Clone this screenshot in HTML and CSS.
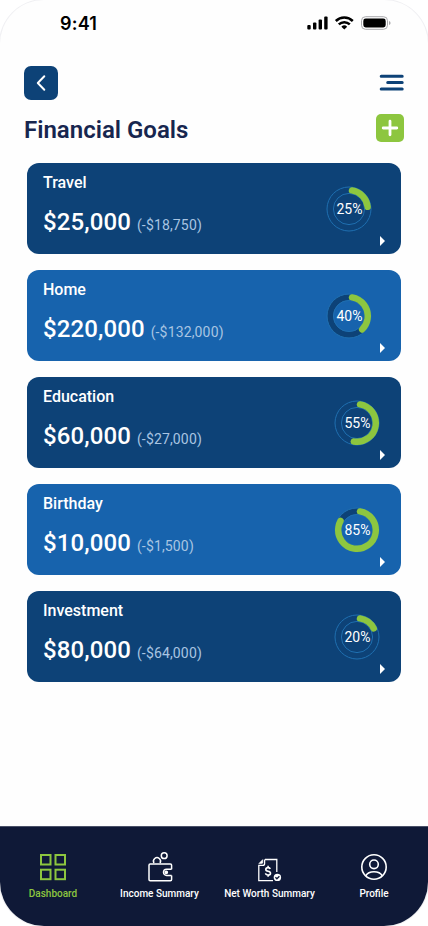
FILE: index.html
```html
<!DOCTYPE html>
<html lang="en">
<head>
    <meta charset="UTF-8">
    <meta name="viewport" content="width=device-width, initial-scale=1.0">
    <title>Financial Goals</title>
    <link rel="stylesheet" href="styles.css">
</head>
<body>
    <div class="screen">
        <div class="status-bar">
            <span class="time">9:41</span>
            <svg width="84" height="16" viewBox="0 0 84 16">
                <rect x="0.3" y="10" width="3.4" height="4.5" rx="1"/>
                <rect x="6" y="7.4" width="3.4" height="7.1" rx="1"/>
                <rect x="11.6" y="4.4" width="3.4" height="10.1" rx="1"/>
                <rect x="17.2" y="1.6" width="3.4" height="12.9" rx="1"/>
                <g fill="none" stroke="#000" stroke-width="2.5">
                    <path d="M28.8 6 A12.2 12.2 0 0 1 45.8 6"/>
                    <path d="M31.8 9.4 A8 8 0 0 1 42.8 9.4"/>
                </g>
                <path d="M37.3 14.5 L34.4 11.7 A4.2 4.2 0 0 1 40.2 11.7 Z"/>
                <rect x="54.5" y="1.7" width="26" height="12.6" rx="4" fill="none" stroke="#a9a9ad"/>
                <rect x="56.3" y="3.5" width="22.4" height="9" rx="2.4"/>
                <path d="M82 5.9 q1.6 0.6 1.6 2.1 t-1.6 2.1 z" fill="#a9a9ad"/>
            </svg>
        </div>

        <div class="top-bar">
            <button class="back-btn">
                <svg width="34" height="34" viewBox="0 0 34 34"><path d="M20.3 10.3 L13.8 17 L20.3 23.7"/></svg>
            </button>
            <svg class="menu-icon" width="26" height="18" viewBox="0 0 26 18">
                <path d="M2.2 2.2 H23.2 M8.7 8.6 H23.2 M2.2 15.1 H23.2"/>
            </svg>
        </div>

        <div class="title-row">
            <h1>Financial Goals</h1>
            <button class="add-btn">
                <svg width="28" height="28" viewBox="0 0 28 28"><path d="M14 7.2 V20.8 M7.2 14 H20.8"/></svg>
            </button>
        </div>

        <div class="goals">
            <div class="goal">
                <h2>Travel</h2>
                <p><span class="amount">$25,000</span><span class="left">(-$18,750)</span></p>
                <div class="ring">
                    <svg width="46" height="46" viewBox="-23 -23 46 46">
                        <circle class="track" r="18.8"/>
                        <circle class="edge" r="22"/>
                        <circle class="edge" r="15.6"/>
                        <circle class="bar" r="18.8" pathLength="360" stroke-dasharray="74 360" transform="rotate(-81)"/>
                    </svg>
                    <span>25%</span>
                </div>
                <i class="arrow"></i>
            </div>
            <div class="goal light">
                <h2>Home</h2>
                <p><span class="amount">$220,000</span><span class="left">(-$132,000)</span></p>
                <div class="ring">
                    <svg width="46" height="46" viewBox="-23 -23 46 46">
                        <circle class="track" r="18.8"/>
                        <circle class="edge" r="22"/>
                        <circle class="edge" r="15.6"/>
                        <circle class="bar" r="18.8" pathLength="360" stroke-dasharray="127 360" transform="rotate(-81)"/>
                    </svg>
                    <span>40%</span>
                </div>
                <i class="arrow"></i>
            </div>
            <div class="goal shift">
                <h2>Education</h2>
                <p><span class="amount">$60,000</span><span class="left">(-$27,000)</span></p>
                <div class="ring">
                    <svg width="46" height="46" viewBox="-23 -23 46 46">
                        <circle class="track" r="18.8"/>
                        <circle class="edge" r="22"/>
                        <circle class="edge" r="15.6"/>
                        <circle class="bar" r="18.8" pathLength="360" stroke-dasharray="181 360" transform="rotate(-81)"/>
                    </svg>
                    <span>55%</span>
                </div>
                <i class="arrow"></i>
            </div>
            <div class="goal light shift">
                <h2>Birthday</h2>
                <p><span class="amount">$10,000</span><span class="left">(-$1,500)</span></p>
                <div class="ring">
                    <svg width="46" height="46" viewBox="-23 -23 46 46">
                        <circle class="track" r="18.8"/>
                        <circle class="edge" r="22"/>
                        <circle class="edge" r="15.6"/>
                        <circle class="bar" r="18.8" pathLength="360" stroke-dasharray="290 360" transform="rotate(-81)"/>
                    </svg>
                    <span>85%</span>
                </div>
                <i class="arrow"></i>
            </div>
            <div class="goal shift">
                <h2>Investment</h2>
                <p><span class="amount">$80,000</span><span class="left">(-$64,000)</span></p>
                <div class="ring">
                    <svg width="46" height="46" viewBox="-23 -23 46 46">
                        <circle class="track" r="18.8"/>
                        <circle class="edge" r="22"/>
                        <circle class="edge" r="15.6"/>
                        <circle class="bar" r="18.8" pathLength="360" stroke-dasharray="54 360" transform="rotate(-81)"/>
                    </svg>
                    <span>20%</span>
                </div>
                <i class="arrow"></i>
            </div>
        </div>

        <nav class="tab-bar">
            <a class="active">
                <svg width="28" height="32" viewBox="0 0 28 32" stroke-width="2">
                    <rect x="2" y="4" width="9.5" height="9.5"/>
                    <rect x="16.5" y="4" width="9.5" height="9.5"/>
                    <rect x="2" y="18.7" width="9.5" height="9.5"/>
                    <rect x="16.5" y="18.7" width="9.5" height="9.5"/>
                </svg>
                Dashboard
            </a>
            <a>
                <svg width="28" height="32" viewBox="0 0 28 32" stroke-width="1.5">
                    <circle cx="18.2" cy="4.7" r="2.9"/>
                    <path d="M8 12 A3.5 3.5 0 1 1 14 12"/>
                    <path d="M25.6 18.2 V14.2 Q25.6 13 24.4 13 H4.2 Q3 13 3 14.2 V28.6 Q3 29.8 4.2 29.8 H24.4 Q25.6 29.8 25.6 28.6 V24.4"/>
                    <path d="M25.6 18.2 H20.6 A3.1 3.1 0 0 0 20.6 24.4 H25.6"/>
                    <circle cx="20.3" cy="21.3" r="1.1" fill="#fff"/>
                </svg>
                Income Summary
            </a>
            <a>
                <svg width="28" height="32" viewBox="0 0 28 32" stroke-width="1.3">
                    <path d="M9 8.5 H20.8 V21 M17 29.6 H2.8 V14.4 H6.6 Q8.6 14.4 8.6 12.4 V8.5"/>
                    <path d="M2.8 12.6 L6.8 8.6 V11.2 Q6.8 12.6 5.4 12.6 Z" fill="#fff" stroke-width="0.6"/>
                    <path stroke-width="1.6" d="M14.2 18 Q13.9 16.6 12.1 16.6 Q9.8 16.6 9.8 18.4 Q9.8 19.8 12.1 20.2 Q14.5 20.6 14.5 22.2 Q14.5 24 12.1 24 Q9.7 24 9.6 22.3 M12.1 14.8 V16.6 M12.1 24 V25.8"/>
                    <circle cx="21.4" cy="26.4" r="3.7" fill="#fff" stroke="none"/>
                    <path d="M19.4 26.3 L20.9 27.8 L23.4 25.2" stroke="#0f1937"/>
                </svg>
                Net Worth Summary
            </a>
            <a>
                <svg width="28" height="32" viewBox="0 0 28 32" stroke-width="1.6">
                    <circle cx="14" cy="16" r="12.2"/>
                    <circle cx="14" cy="13.3" r="4.3"/>
                    <path d="M5.8 24.8 Q8 20.8 14 20.8 T22.2 24.8"/>
                </svg>
                Profile
            </a>
        </nav>
    </div>
</body>
</html>
```

FILE: styles.css
```css
* {
    box-sizing: border-box;
}
body {
    margin: 0;
    background-color: #fff;
    font-family: Roboto, Arial, sans-serif;
}
.screen {
    display: flex;
    flex-direction: column;
    height: 926px;
    background: #fefefe;
    border-radius: 44px;
    box-shadow: 0 0 0 1px #f0f0f3;
    overflow: hidden;
}
.status-bar {
    display: flex;
    justify-content: space-between;
    align-items: center;
    height: 46px;
    padding: 0 37px 0 60px;
}
.time {
    padding-top: 2px;
    font-family: Inter, sans-serif;
    font-size: 18px;
    font-weight: 600;
    line-height: 20px;
    letter-spacing: 0.2px;
}
button {
    display: block;
    padding: 0;
    border: none;
}
button svg {
    display: block;
    fill: none;
    stroke: #fff;
    stroke-linecap: round;
    stroke-linejoin: round;
}
.top-bar {
    display: flex;
    justify-content: space-between;
    align-items: center;
    height: 34px;
    margin-top: 20px;
    padding: 0 23px 0 24px;
}
.back-btn {
    border-radius: 7px;
    background-color: #0d4277;
    stroke-width: 2;
}
.menu-icon {
    fill: none;
    stroke: #0d4277;
    stroke-width: 3;
    stroke-linecap: round;
}
.title-row {
    display: flex;
    justify-content: space-between;
    height: 28px;
    margin-top: 14px;
    padding: 0 24px;
}
h1 {
    margin: 0;
    font-size: 24px;
    font-weight: 600;
    line-height: 32px;
    color: #17264f;
}
.add-btn {
    border-radius: 5px;
    background-color: #8dc63f;
    stroke-width: 2.8;
}

/* goal cards */
.goals {
    display: flex;
    flex-direction: column;
    gap: 16px;
    margin: 21px 27px 0;
}
.goal {
    position: relative;
    height: 91px;
    padding: 10px 16px;
    border-radius: 12px;
    background-color: #0d4277;
    color: #fff;
}
.goal.light {
    background-color: #1763ad;
}
.goal h2 {
    margin: 0;
    font-size: 16px;
    font-weight: 500;
    line-height: 20px;
}
.goal p {
    display: flex;
    align-items: baseline;
    gap: 6px;
    margin: 14px 0 0;
    line-height: 30px;
}
.amount {
    font-size: 24px;
    font-weight: 500;
    letter-spacing: 0.1px;
}
.left {
    font-size: 14px;
    font-weight: 450;
    letter-spacing: 0.15px;
    color: #a9c5e2;
}
.ring {
    position: absolute;
    top: 23px;
    right: 29px;
    display: grid;
    place-items: center;
    width: 46px;
    height: 46px;
    font-size: 14px;
}
.shift .ring {
    right: 21px;
}
.ring svg, .ring span {
    grid-area: 1 / 1;
}
.ring span {
    padding-left: 1px;
}
.ring circle {
    fill: none;
}
.track {
    stroke: #0d4277;
    stroke-width: 6;
}
.edge {
    stroke: #1f6fb0;
    stroke-width: 1;
}
.bar {
    stroke: #8dc63f;
    stroke-width: 6.4;
    stroke-linecap: round;
}
.arrow {
    position: absolute;
    right: 16px;
    bottom: 8px;
    border: 5px solid transparent;
    border-left-color: #fff;
    border-right-width: 0;
}

/* bottom navigation */
.tab-bar {
    display: grid;
    grid-template-columns: 106px 107px 113px 96px;
    height: 100px;
    margin-top: auto;
    border-top: 1px solid #4a5168;
    background-color: #0f1937;
}
.tab-bar a {
    display: flex;
    flex-direction: column;
    align-items: center;
    gap: 4px;
    padding-top: 24px;
    font-size: 10px;
    font-weight: 500;
    line-height: 14px;
    color: #fff;
    white-space: nowrap;
}
.tab-bar svg {
    fill: none;
    stroke: currentColor;
}
.tab-bar .active {
    color: #8dc63f;
}
```
